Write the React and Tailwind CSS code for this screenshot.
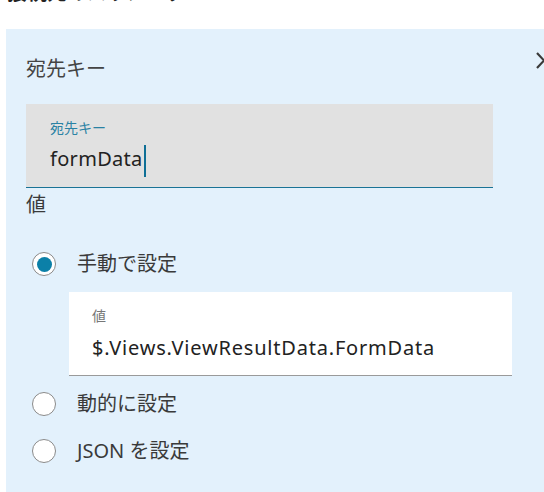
import React, { useState } from 'react';

const font = { fontFamily: '"Noto Sans", "Open Sans", "Noto Sans CJK JP", sans-serif' };

const Radio = ({ checked, label, onSelect }) => (
  <button type="button" onClick={onSelect} className="flex h-[28px] items-center gap-[21px] pl-[6px] text-left">
    <span className="flex h-[24px] w-[24px] items-center justify-center rounded-full border border-[#8a8a8a] bg-white">
      {checked && <span className="h-[15px] w-[15px] rounded-full bg-[#0b80a8]" />}
    </span>
    <span className="text-[20px] leading-[28px] text-[#3a3a3a]">{label}</span>
  </button>
);

const App = () => {
  const [mode, setMode] = useState('manual');

  return (
    <div className="h-[492px] w-[544px] overflow-hidden bg-white" style={font}>
      <div className="h-[29px] overflow-hidden pl-[7px]">
        <p className="-mt-[21px] text-[20px] font-bold leading-[28px] text-[#222]">接続先のパラメーター</p>
      </div>

      <div className="relative ml-[6px] h-[463px] bg-[#e3f1fc] pl-[20px] pt-[26px]">
        <svg className="absolute left-[530px] top-[23px]" width="16" height="17" viewBox="0 0 16 17" fill="none">
          <path d="M1 1 L15 16 M15 1 L1 16" stroke="#3a3a3a" strokeWidth="2.2" />
        </svg>

        <h2 className="h-[28px] text-[20px] font-normal leading-[28px] text-[#444]">宛先キー</h2>

        <div className="mt-[21px] h-[84px] w-[467px] border-b-[1.5px] border-[#1a7396] bg-[#e1e1e1] pl-[24px] pt-[15px]">
          <p className="text-[14px] leading-[18px] text-[#2a82a4]">宛先キー</p>
          <div className="mt-[8px] flex h-[28px] items-center">
            <span className="text-[20px] leading-[28px] tracking-[0.3px] text-[#222]">formData</span>
            <span className="ml-[1px] h-[32px] w-[2px] translate-y-[2px] bg-[#0e6f96]" />
          </div>
        </div>

        <p className="mt-[3px] text-[20px] leading-[28px] text-[#3a3a3a]">値</p>

        <div className="mt-[31px]">
          <Radio checked={mode === 'manual'} label="手動で設定" onSelect={() => setMode('manual')} />
        </div>

        <div className="ml-[43px] mt-[14px] h-[84px] w-[443px] border-b border-[#9a9a9a] bg-white pl-[23px] pt-[15px]">
          <p className="text-[14px] leading-[18px] text-[#777]">値</p>
          <p className="mt-[9px] text-[20px] leading-[28px] tracking-[0.8px] text-[#222]">$.Views.ViewResultData.FormData</p>
        </div>

        <div className="mt-[14px] flex flex-col gap-[19px]">
          <Radio checked={mode === 'dynamic'} label="動的に設定" onSelect={() => setMode('dynamic')} />
          <Radio checked={mode === 'json'} label="JSON を設定" onSelect={() => setMode('json')} />
        </div>
      </div>
    </div>
  );
};

export default App;
